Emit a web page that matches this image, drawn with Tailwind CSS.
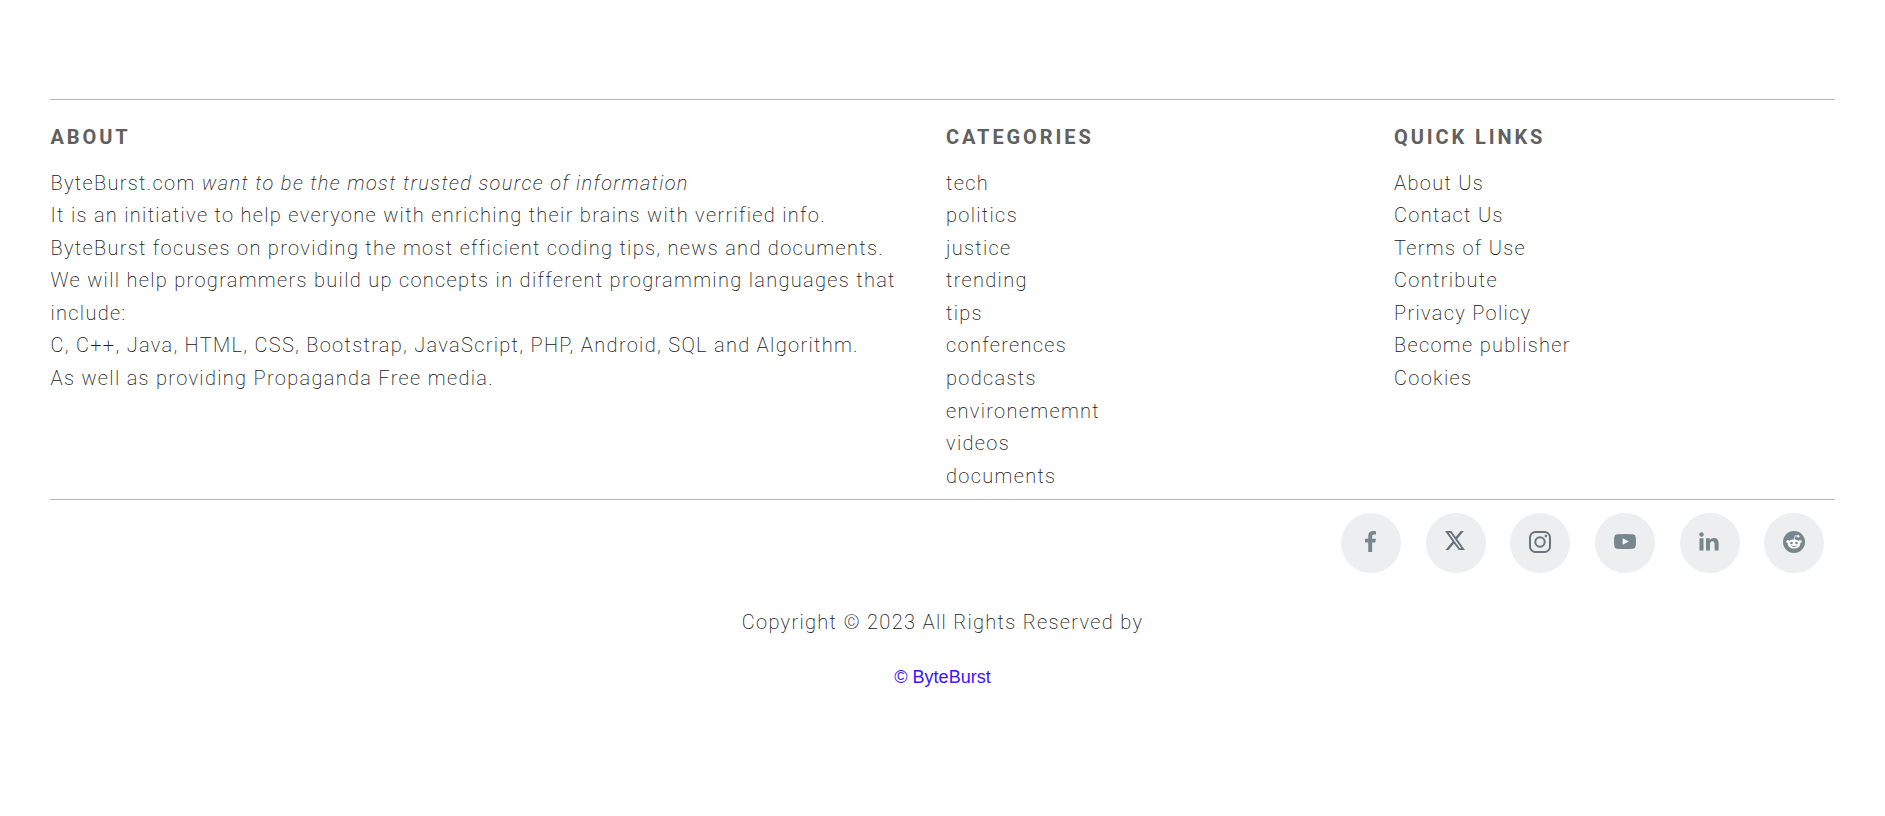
<!DOCTYPE html>
<html lang="en">
<head>
<meta charset="utf-8">
<title>ByteBurst</title>
<script src="https://cdn.jsdelivr.net/npm/@tailwindcss/browser@4"></script>
</head>
<body class="bg-white">
<footer class="px-[50px] pt-[99px] font-[Roboto,sans-serif] text-[20px] leading-[32.56px] font-extralight tracking-[1.31px] text-[#202020]">
  <div class="flex h-[401px] border-y border-[#b8b8b8] pt-[21px]">
    <section class="w-[896px] shrink-0 pr-[30px] pl-[0.5px]">
      <h6 class="mb-[13px] font-bold tracking-[2.9px] text-[#606060]">ABOUT</h6>
      <p>ByteBurst.com <i class="tracking-[1.38px]">want to be the most trusted source of information</i><br>It is an initiative to help everyone with enriching their brains with verrified info.<br>ByteBurst focuses on providing the most efficient coding tips, news and documents.<br>We will help programmers build up concepts in different programming languages that include:<br>C, C++, Java, HTML, CSS, Bootstrap, JavaScript, PHP, Android, SQL and Algorithm.<br>As well as providing Propaganda Free media.</p>
    </section>
    <section class="w-[448px] shrink-0">
      <h6 class="mb-[13px] font-bold tracking-[2.9px] text-[#606060]">CATEGORIES</h6>
      <ul>
        <li><a>tech</a></li><li><a>politics</a></li><li><a>justice</a></li><li><a>trending</a></li><li><a>tips</a></li><li><a>conferences</a></li><li><a>podcasts</a></li><li><a>environememnt</a></li><li><a>videos</a></li><li><a>documents</a></li>
      </ul>
    </section>
    <section>
      <h6 class="mb-[13px] font-bold tracking-[2.9px] text-[#606060]">QUICK LINKS</h6>
      <ul>
        <li><a>About Us</a></li><li><a>Contact Us</a></li><li><a>Terms of Use</a></li><li><a>Contribute</a></li><li><a>Privacy Policy</a></li><li><a>Become publisher</a></li><li><a>Cookies</a></li>
      </ul>
    </section>
  </div>
  <div class="mt-[13px] mr-[10.8px] flex justify-end gap-[24.6px] text-[#78868e]">
    <a class="flex size-[60px] items-center justify-center rounded-full bg-[#eceeef]">
      <svg class="mr-px mb-[3px] h-[21px] w-[11px]" viewBox="479 0 864 1664" preserveAspectRatio="none" fill="currentColor"><path d="M1343 12v264h-157q-86 0-116 36t-30 108v189h293l-39 296h-254v759h-306v-759h-255v-296h255v-218q0-186 104-288.500t277-102.500q147 0 228 12z"/></svg>
    </a>
    <a class="flex size-[60px] items-center justify-center rounded-full bg-[#eceeef]">
      <svg class="mr-px mb-[5px] h-[19px] w-5 text-[#63727b]" viewBox="0 0 16 16" preserveAspectRatio="none" fill="currentColor"><path transform="translate(0 -.8) scale(1 1.106)" d="M12.600.750h2.454l-5.360 6.142L16 15.250h-4.937l-3.867-5.070-4.425 5.070H.316l5.733-6.570L0 .750h5.063l3.495 4.633L12.601.750Zm-.860 13.028h1.360L4.323 2.145H2.865z"/></svg>
    </a>
    <a class="flex size-[60px] items-center justify-center rounded-full bg-[#eceeef]">
      <svg class="mb-0.5 size-[22px] text-[#66757e]" viewBox="0 0 22 22" fill="none" stroke="currentColor" stroke-width="2"><rect x="1" y="1" width="20" height="20" rx="5.500"/><circle cx="11" cy="11" r="4.700"/><circle cx="16.900" cy="5.100" r="1.300" fill="currentColor" stroke="none"/></svg>
    </a>
    <a class="flex size-[60px] items-center justify-center rounded-full bg-[#eceeef]">
      <svg class="mr-px mb-[3px] h-[15px] w-[22px]" viewBox="0 0 22 15" fill="currentColor"><path d="M3 .3Q11-.3 19 .3 21.400.500 21.700 3 22.200 7.500 21.700 12 21.400 14.500 19 14.700 11 15.300 3 14.700.600 14.500.300 12-.2 7.500.300 3 .600.500 3 .300Z"/><path fill="#fff" d="M8.700 4.200v6.600L14.700 7.500Z"/></svg>
    </a>
    <a class="flex size-[60px] items-center justify-center rounded-full bg-[#eceeef]">
      <svg class="mr-px mb-[3px] h-[19px] w-5" viewBox="0 0 20 19" fill="currentColor"><path d="M.500 6.300h4V18.500h-4zM7 6.300h3.900V8c.800-1.200 2-2 3.900-2 3 0 4.800 1.800 4.800 5.500v7h-4V12c0-1.700-.600-2.800-2.100-2.800-1.600 0-2.500 1.100-2.500 2.800v6.500H7z"/><circle cx="2.500" cy="2.500" r="2.200"/></svg>
    </a>
    <a class="flex size-[60px] items-center justify-center rounded-full bg-[#eceeef]">
      <svg class="mb-0.5 size-[22px]" viewBox="0 0 22 22"><circle cx="11" cy="11" r="11" fill="currentColor"/><g fill="#fff"><ellipse cx="11" cy="13" rx="6.300" ry="4.500"/><circle cx="4.900" cy="10.600" r="1.600"/><circle cx="17.100" cy="10.600" r="1.600"/><circle cx="15.200" cy="5.300" r="1.200"/></g><path d="M11.200 9l.9-4.300 3 .6" fill="none" stroke="#fff" stroke-width=".8"/><g fill="currentColor"><circle cx="8.500" cy="12" r="1.300"/><circle cx="13.500" cy="12" r="1.300"/></g><path d="M8.300 14.700q2.700 1.900 5.400 0" fill="none" stroke="currentColor" stroke-width=".9"/></svg>
    </a>
  </div>
  <p class="mt-[33px] text-center">Copyright © 2023 All Rights Reserved by</p>
  <p class="mt-[22px] text-center font-['Liberation_Sans',sans-serif] text-[18px] font-normal tracking-normal text-[#3c14ff]">© ByteBurst</p>
</footer>
</body>
</html>
